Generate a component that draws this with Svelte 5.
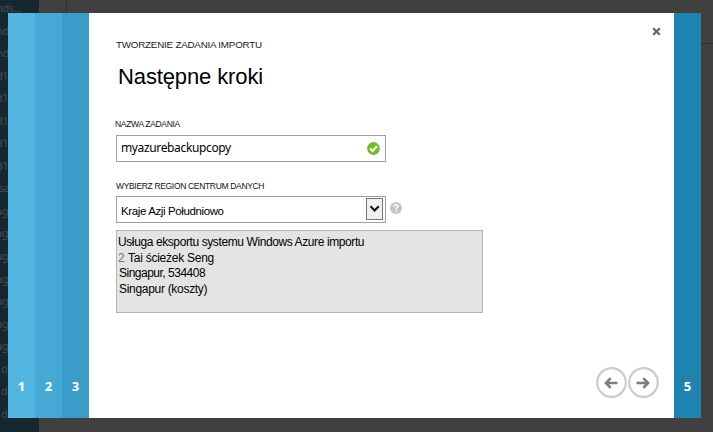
<script>
  const rows = ['nds...', 'nd', 'nd', 'd1', 'd1', 'd1', 'd1', 'd1', 'sa', 'ag', 'ag', 'ag', 'ag', 'ag', 'ag', 'ag', 'd', 'd', 'd', 'd'];
  const indents = { n: -4, d: -4, s: -1, a: -4 };
</script>

<div class="page">
  <aside>
    {#each rows as row}
      <div class="row" style:text-indent="{row === 'd' ? 1 : indents[row[0]]}px">{row}</div>
    {/each}
  </aside>
  <div class="back"></div>

  <div class="dialog">
    <div class="step s1">1</div>
    <div class="step s2">2</div>
    <div class="step s3">3</div>
    <main>
      <button class="close" aria-label="Zamknij">
        <svg width="9" height="9" viewBox="0 0 9 9"><path d="M1.2 1.2 7.8 7.8M7.8 1.2 1.2 7.8" stroke="#666" stroke-width="2.3" /></svg>
      </button>
      <div class="eyebrow"><span>TWORZENIE ZADANIA IMPORTU</span></div>
      <h1>Następne kroki</h1>
      <div class="label name">NAZWA ZADANIA</div>
      <div class="field">
        <span class="value">myazurebackupcopy</span>
        <svg class="check" width="13" height="13" viewBox="0 0 13 13"><circle cx="6.5" cy="6.5" r="6.4" fill="#76bc2d" /><path d="M3.1 6.5 5.6 9 10 4.3" fill="none" stroke="#fff" stroke-width="2" /></svg>
      </div>
      <div class="label region">WYBIERZ REGION CENTRUM DANYCH</div>
      <div class="line">
        <div class="field select">
          <span class="choice">Kraje Azji Południowo</span>
          <span class="drop"><svg width="15" height="20" viewBox="0 0 15 20"><path d="M3.5 7.2 7.6 11.5 11.8 7.2" fill="none" stroke="#111" stroke-width="2.1" /></svg></span>
        </div>
        <svg class="help" width="12" height="12" viewBox="0 0 12 12"><circle cx="6" cy="6" r="6" fill="#c4c4c4" /><path d="M4.1 4.7C4.1 2.3 8 2.3 8 4.5 8 5.9 6.1 5.8 6.1 7.3M6.1 8.2V9.7" fill="none" stroke="#fff" stroke-width="1.5" /></svg>
      </div>
      <div class="address">
        <div class="a1">Usługa eksportu systemu Windows Azure importu</div>
        <div class="a2"><span class="num">2</span><span>Tai ścieżek Seng</span></div>
        <div class="a3">Singapur, 534408</div>
        <div class="a4">Singapur (koszty)</div>
      </div>
      <nav>
        <svg width="31" height="31" viewBox="0 0 31 31"><circle cx="15.5" cy="15.5" r="14.3" fill="#fff" stroke="#ccc" stroke-width="2.2" /><path d="M21.5 16H10M14.7 11.2 9.9 16 14.7 20.8" fill="none" stroke="#7d7d7d" stroke-width="2.5" /></svg>
        <svg width="31" height="31" viewBox="0 0 31 31"><circle cx="15.5" cy="15.5" r="14.3" fill="#fff" stroke="#ccc" stroke-width="2.2" /><path d="M8.5 16H20M15.3 11.2 20.1 16 15.3 20.8" fill="none" stroke="#7d7d7d" stroke-width="2.5" /></svg>
      </nav>
    </main>
    <div class="step s5">5</div>
  </div>
</div>

<style>
  .page { position: relative; display: flex; width: 713px; height: 432px; overflow: hidden; background: #404040; font-family: "Liberation Sans", Arial, sans-serif; color: #000; }
  aside { width: 39px; flex: none; overflow: hidden; background: #15272f; color: #4a4a4a; font: 11px/22.55px "Noto Sans", sans-serif; letter-spacing: -.4px; margin-top: -3px; height: 435px; white-space: nowrap; }
  .row { height: 22.55px; }
  .back { flex: 1; margin-left: 27px; border-left: 1px solid #303030; border-bottom: 1px solid #303030; height: 44px; box-sizing: border-box; }
  .dialog { position: absolute; left: 8px; top: 13px; width: 693px; height: 405px; display: flex; background: #fff; }
  .step { width: 27px; flex: none; box-sizing: border-box; padding-bottom: 23px; display: flex; align-items: flex-end; justify-content: center; color: #fff; font: bold 13px/18px "Open Sans", sans-serif; }
  .s1 { background: #53b6e1; }
  .s2 { background: #46a9d5; }
  .s3 { background: #3a9dc9; }
  .s5 { background: #1f83b0; }
  main { position: relative; flex: 1; padding-left: 27px; box-sizing: border-box; white-space: nowrap; }
  .close { position: absolute; left: 563px; top: 14px; width: 9px; height: 9px; padding: 0; border: 0; background: none; display: flex; }
  .eyebrow { margin-top: 25px; height: 14px; font-size: 9.8px; line-height: 14px; color: #222; letter-spacing: -.21px; }
  h1 { margin: 11px 0 0 2px; height: 28px; font-size: 22px; line-height: 28px; font-weight: 400; letter-spacing: -.12px; }
  .label { height: 12px; font-size: 8.5px; line-height: 12px; color: #111; letter-spacing: -.33px; }
  .name { margin: 27px 0 0 -1px; }
  .field { box-sizing: border-box; width: 270px; height: 27px; border: 1px solid #a0a0a0; display: flex; justify-content: space-between; margin-top: 5px; padding-left: 4px; }
  .value { font: 12px/23px "Noto Sans", sans-serif; letter-spacing: -.36px; }
  .check { margin: 6px 5px 0 0; }
  .region { margin-top: 18px; }
  .line { display: flex; margin-top: 4px; }
  .select { margin: 0; }
  .choice { font-size: 11.5px; line-height: 28px; letter-spacing: -.38px; }
  .drop { width: 15px; height: 20px; margin: 1px 2px 0 0; border: 1px solid #777; background: #f0f0f0; }
  .drop svg { display: block; }
  .help { margin: 6px 0 0 4px; }
  .address { box-sizing: border-box; width: 367px; height: 83px; margin-top: 7px; border: 1px solid #b5b5b5; background: #e4e4e4; padding: 4px 0 0 1px; font-size: 12px; line-height: 15.7px; }
  .a1 { letter-spacing: -.4px; }
  .a2 { display: flex; letter-spacing: -.25px; }
  .num { width: 10px; color: #777; line-height: 14px; }
  .a3, .a4 { padding-left: 1px; letter-spacing: -.5px; }
  .a4 { letter-spacing: -.3px; }
  nav { position: absolute; left: 507px; top: 354px; display: flex; gap: 1px; }
</style>
